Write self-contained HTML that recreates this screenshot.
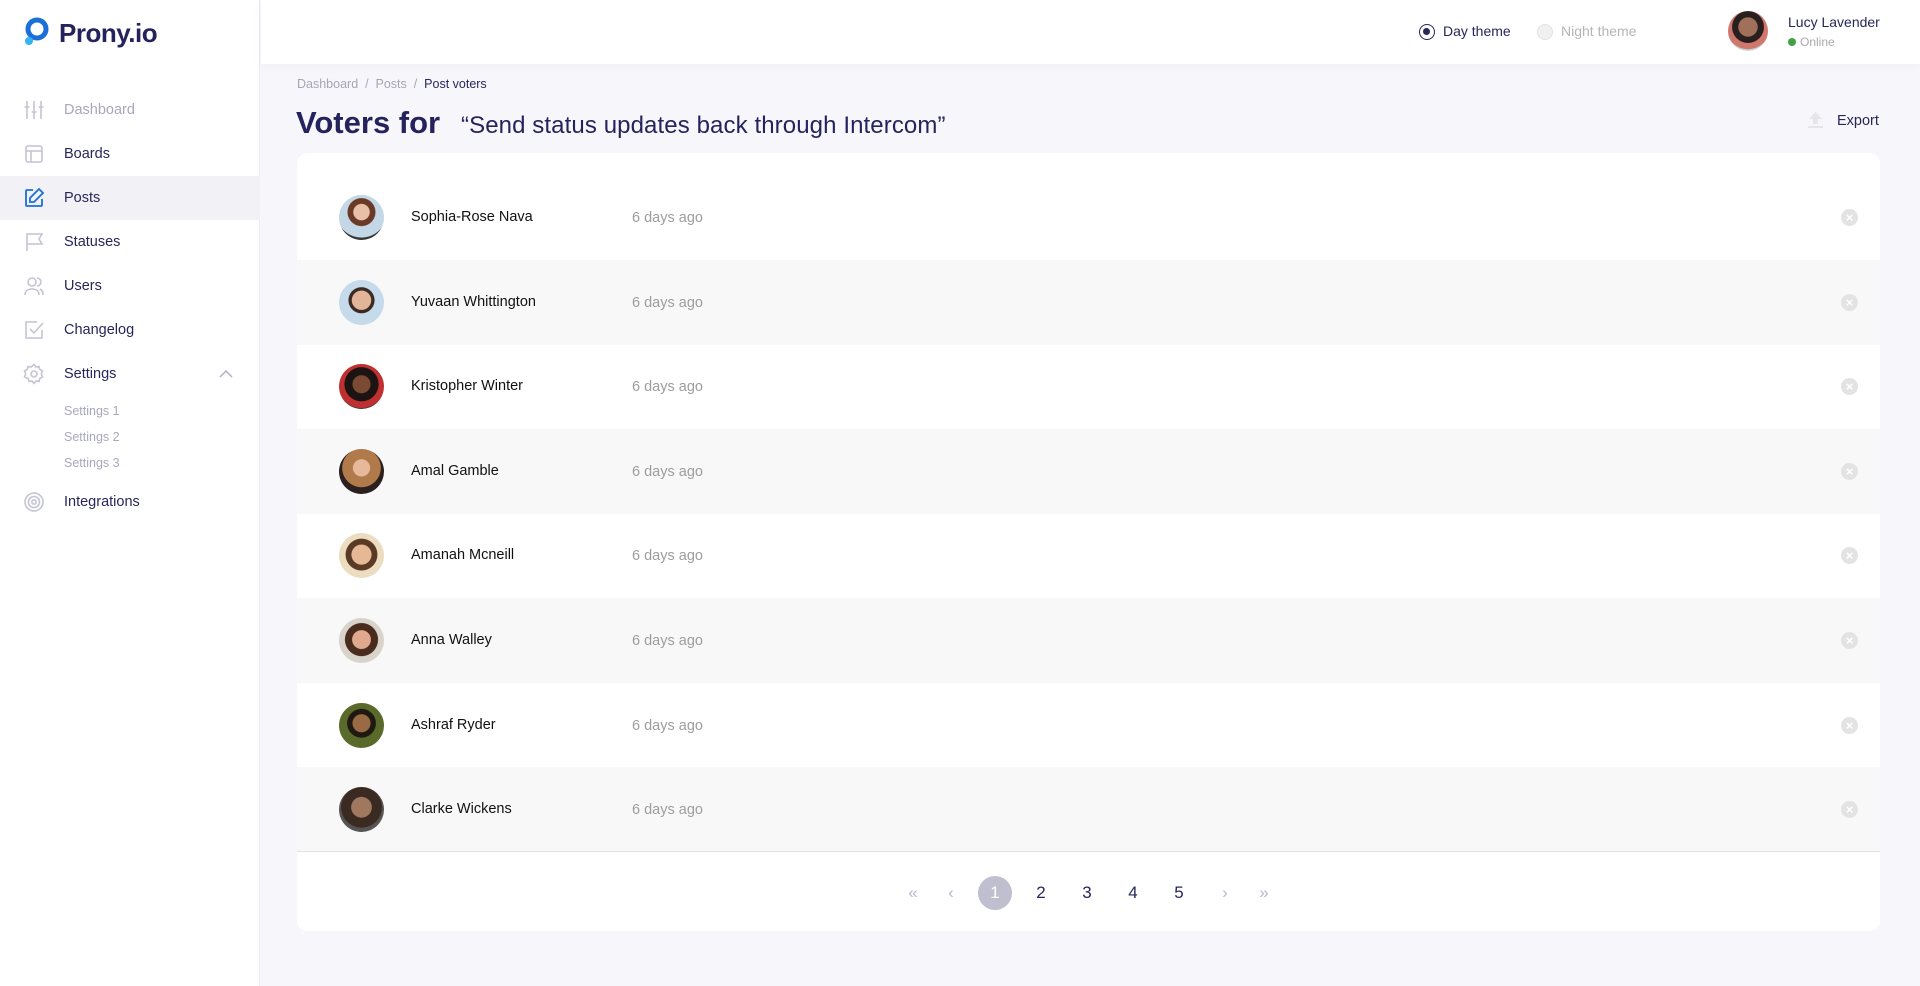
<!DOCTYPE html>
<html><head><meta charset="utf-8"><style>
*{box-sizing:border-box;margin:0;padding:0}
body{width:1920px;height:986px;background:#f7f7fb;font-family:"Liberation Sans",sans-serif;position:relative;overflow:hidden;color:#27265a}
.side{position:absolute;left:0;top:0;width:260px;height:986px;background:#fff;border-right:1px solid #ececf2}
.logo{position:absolute;left:24px;top:18px;font-size:26px;font-weight:bold;color:#25235d;letter-spacing:-0.5px}
.logo span{position:absolute;left:35px;top:0}
.nav{position:absolute;left:0;width:260px;height:44px;display:flex;align-items:center;font-size:14.5px;color:#27265a}
.nav .t{position:absolute;left:64px}
.nav svg{position:absolute;left:23px;top:11px}
.sub{position:absolute;left:64px;font-size:12.5px;color:#a8a8bd}
.top{position:absolute;left:261px;top:0;right:0;height:64px;background:#fff;box-shadow:0 2px 10px rgba(0,0,0,.04)}
.av{position:absolute;border-radius:50%;overflow:hidden}
.card{position:absolute;left:297px;top:153px;width:1583px;height:778px;background:#fff;border-radius:10px;overflow:hidden}
.row{position:absolute;left:0;width:1583px;height:85px}
.row.g{background:#f8f8f8}
.row .a{position:absolute;left:42px;width:45px;height:45px;border-radius:50%;top:20px}
.row .n{position:absolute;left:114px;top:34px;font-size:14.5px;color:#111}
.row .d{position:absolute;left:335px;top:35px;font-size:14.5px;color:#9d9d9d}
.row .x{position:absolute;left:1544px;top:34px;width:17px;height:17px;border-radius:50%;background:#e3e3e3;color:#fff;font-size:13px;line-height:17px;text-align:center;font-weight:bold}
.pg{position:absolute;top:876px;font-size:17px;color:#27265a;width:34px;height:34px;line-height:34px;text-align:center;transform:translateX(-17px)}
</style></head><body>
<div class="side">
 <div class="logo"><svg width="28" height="32" viewBox="0 0 28 32" style="position:absolute;left:0;top:-1px"><circle cx="13" cy="12" r="9" fill="none" stroke="#1b6fd9" stroke-width="5"/><circle cx="5" cy="24" r="4" fill="#35b3f5"/></svg><span>Prony.io</span></div>
 <div class="nav" style="top:88px"><svg width="22" height="22" viewBox="0 0 22 22" fill="none" stroke="#c4c4d4" stroke-width="1.6"><path d="M4 2v18M11 2v18M18 2v18M1.5 8h5M8.5 13h5M15.5 8h5"/></svg><span class="t" style="color:#a8a8bd">Dashboard</span></div>
 <div class="nav" style="top:132px"><svg width="22" height="22" viewBox="0 0 22 22" fill="none" stroke="#c4c4d4" stroke-width="1.6"><rect x="3" y="3" width="16" height="16" rx="2"/><path d="M3 8h16M8 8v11"/></svg><span class="t">Boards</span></div>
 <div class="nav" style="top:176px;background:#f1f1f6"><svg width="22" height="22" viewBox="0 0 22 22" fill="none" stroke="#1b6fd9" stroke-width="1.8"><path d="M10 3H4a1 1 0 0 0-1 1v14a1 1 0 0 0 1 1h14a1 1 0 0 0 1-1v-6"/><path d="M16 2l4 4-9 9H7v-4z"/></svg><span class="t">Posts</span></div>
 <div class="nav" style="top:220px"><svg width="22" height="22" viewBox="0 0 22 22" fill="none" stroke="#c4c4d4" stroke-width="1.6"><path d="M4 20V3h15l-3 5 3 5H4"/></svg><span class="t">Statuses</span></div>
 <div class="nav" style="top:264px"><svg width="22" height="22" viewBox="0 0 22 22" fill="none" stroke="#c4c4d4" stroke-width="1.6"><circle cx="9" cy="7" r="4"/><path d="M2 20c0-4 3-6 7-6s7 2 7 6M14 3a4 4 0 0 1 0 8M17 14c2 1 3 3 3 6"/></svg><span class="t">Users</span></div>
 <div class="nav" style="top:308px"><svg width="22" height="22" viewBox="0 0 22 22" fill="none" stroke="#c4c4d4" stroke-width="1.6"><path d="M19 11v8H3V3h11"/><path d="M7 10l4 4 9-10"/></svg><span class="t">Changelog</span></div>
 <div class="nav" style="top:352px"><svg width="22" height="22" viewBox="0 0 22 22" fill="none" stroke="#c4c4d4" stroke-width="1.6"><circle cx="11" cy="11" r="3"/><path d="M11 1.5l2 2.5 3-.5.8 3 2.7 1.5-1.2 3 1.2 3-2.7 1.5-.8 3-3-.5-2 2.5-2-2.5-3 .5-.8-3L1.5 14l1.2-3-1.2-3L4.2 6.5l.8-3 3 .5z"/></svg><span class="t">Settings</span><svg width="14" height="10" viewBox="0 0 14 10" style="left:219px;top:17px" fill="none" stroke="#b0b0c4" stroke-width="1.5"><path d="M1 8l6-6 6 6"/></svg></div>
 <div class="sub" style="top:404px">Settings 1</div>
 <div class="sub" style="top:430px">Settings 2</div>
 <div class="sub" style="top:456px">Settings 3</div>
 <div class="nav" style="top:480px"><svg width="22" height="22" viewBox="0 0 22 22" fill="none" stroke="#c4c4d4" stroke-width="1.6"><circle cx="11" cy="11" r="9"/><circle cx="11" cy="11" r="5.5"/><circle cx="11" cy="11" r="2.2"/></svg><span class="t">Integrations</span></div>
</div>
<div class="top">
 <div style="position:absolute;left:1158px;top:24px;width:16px;height:16px;border-radius:50%;border:1.6px solid #27265a"><div style="position:absolute;left:3px;top:3px;width:7px;height:7px;border-radius:50%;background:#27265a"></div></div>
 <div style="position:absolute;left:1182px;top:23px;font-size:14px;color:#27265a">Day theme</div>
 <div style="position:absolute;left:1276px;top:24px;width:16px;height:16px;border-radius:50%;border:1px solid #e2e2e2;background:#f0f0f0"></div>
 <div style="position:absolute;left:1300px;top:23px;font-size:14px;color:#b5b5b5">Night theme</div>
 <div class="av" style="left:1467px;top:11px;width:40px;height:40px;background:radial-gradient(circle at 50% 40%,#a0705a 0 30%,#2a1f1f 32% 50%,#d0786e 52% 70%,#c9d6dc 72%)"></div>
 <div style="position:absolute;left:1527px;top:14px;font-size:14px;color:#27265a">Lucy Lavender</div>
 <div style="position:absolute;left:1527px;top:38px;width:8px;height:8px;border-radius:50%;background:#43a047"></div>
 <div style="position:absolute;left:1539px;top:35px;font-size:12px;color:#aaa">Online</div>
</div>
<div style="position:absolute;left:297px;top:77px;font-size:12.5px;color:#a5a5b5">Dashboard &nbsp;/ &nbsp;Posts &nbsp;/ &nbsp;<span style="color:#27265a">Post voters</span></div>
<div style="position:absolute;left:296px;top:105px;font-size:31px;font-weight:bold;color:#25235d">Voters for</div>
<div style="position:absolute;left:461px;top:112px;font-size:24px;color:#25235d;letter-spacing:0.1px">“Send status updates back through Intercom”</div>
<svg style="position:absolute;left:1807px;top:111px" width="17" height="18" viewBox="0 0 17 18"><path d="M8.5 1L15 8h-4v5H6V8H2z" fill="#e5e5ea"/><rect x="1" y="15" width="15" height="2" fill="#e5e5ea"/></svg>
<div style="position:absolute;left:1837px;top:113px;font-size:14.5px;color:#27265a">Export</div>
<div class="card">
 <div class="row" style="top:22px"><div class="a" style="background:radial-gradient(circle at 50% 38%,#e8c0a8 0 22%,#6a3a26 24% 38%,#c3d7e6 40% 70%,#333 72%)"></div><div class="n">Sophia-Rose Nava</div><div class="d">6 days ago</div><div class="x">×</div></div>
 <div class="row g" style="top:107px"><div class="a" style="background:radial-gradient(circle at 50% 45%,#e2b49a 0 28%,#3a2a22 30% 38%,#c5dbec 40% 75%,#222 77%)"></div><div class="n">Yuvaan Whittington</div><div class="d">6 days ago</div><div class="x">×</div></div>
 <div class="row" style="top:191px"><div class="a" style="background:radial-gradient(circle at 50% 45%,#7a4a32 0 26%,#1c1412 28% 50%,#c03030 52% 70%,#3a3a3a 72%)"></div><div class="n">Kristopher Winter</div><div class="d">6 days ago</div><div class="x">×</div></div>
 <div class="row g" style="top:276px"><div class="a" style="background:radial-gradient(circle at 50% 42%,#e8b89a 0 24%,#b07a4a 26% 55%,#2a2020 57%)"></div><div class="n">Amal Gamble</div><div class="d">6 days ago</div><div class="x">×</div></div>
 <div class="row" style="top:360px"><div class="a" style="background:radial-gradient(circle at 50% 48%,#e6b896 0 30%,#5a3a24 32% 48%,#ecdcc0 50%)"></div><div class="n">Amanah Mcneill</div><div class="d">6 days ago</div><div class="x">×</div></div>
 <div class="row g" style="top:445px"><div class="a" style="background:radial-gradient(circle at 50% 48%,#e0a88c 0 28%,#4a2c1e 30% 50%,#d8d4cc 52%)"></div><div class="n">Anna Walley</div><div class="d">6 days ago</div><div class="x">×</div></div>
 <div class="row" style="top:530px"><div class="a" style="background:radial-gradient(circle at 50% 45%,#9a6a44 0 26%,#1e1a12 28% 42%,#5a6a2a 44% 75%,#2a2a1a 77%)"></div><div class="n">Ashraf Ryder</div><div class="d">6 days ago</div><div class="x">×</div></div>
 <div class="row g" style="top:614px;border-bottom:1px solid #e3e3e3"><div class="a" style="background:radial-gradient(circle at 50% 45%,#a07860 0 30%,#3a2a22 32% 60%,#555 62%)"></div><div class="n">Clarke Wickens</div><div class="d">6 days ago</div><div class="x">×</div></div>
</div>
<div class="pg" style="left:913px;color:#b8b8cc">«</div>
<div class="pg" style="left:951px;color:#b8b8cc">‹</div>
<div class="pg" style="left:995px;background:#c0bfcf;color:#fff;border-radius:50%">1</div>
<div class="pg" style="left:1041px">2</div>
<div class="pg" style="left:1087px">3</div>
<div class="pg" style="left:1133px">4</div>
<div class="pg" style="left:1179px">5</div>
<div class="pg" style="left:1225px;color:#b8b8cc">›</div>
<div class="pg" style="left:1264px;color:#b8b8cc">»</div>
</body></html>
